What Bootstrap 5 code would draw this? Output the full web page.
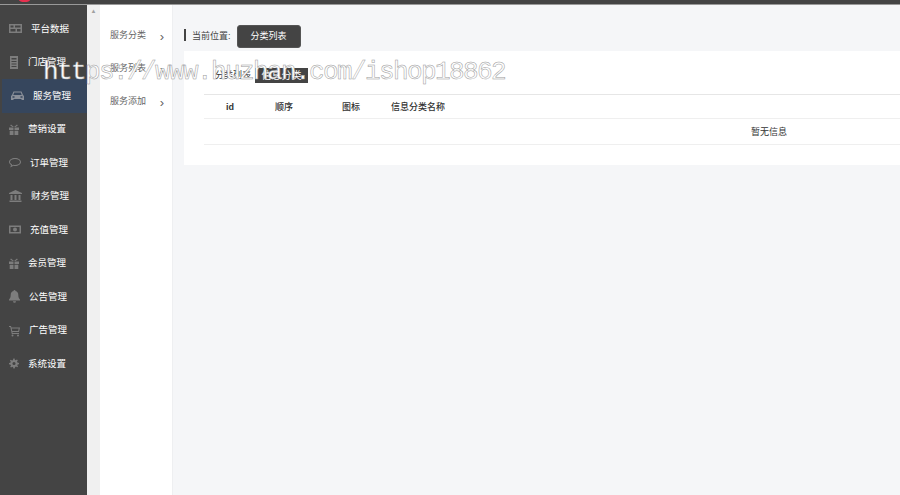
<!DOCTYPE html>
<html lang="zh">
<head>
  <meta charset="UTF-8" />
  <title>分类列表</title>
  <link href="https://cdn.jsdelivr.net/npm/bootstrap@5.3.3/dist/css/bootstrap.min.css" rel="stylesheet" />
  <style>
    html, body { height: 100%; }
    body {
      font-family: "Liberation Sans", "Noto Sans CJK SC", sans-serif;
      font-size: 9px;
      background: #f5f6f8;
      color: #333;
      overflow: hidden;
    }
    .top-strip { height: 5px; background: #444; border-bottom: 1px solid #999; overflow: hidden; }
    .top-logo { width: 11px; height: 4px; margin: -2px 0 0 19px; background: #e8304f; border-radius: 50%; }
    .page-body { height: 490px; }
    .side-main { width: 87px; background: #444; padding-top: 7px; }
    .side-item { height: 33.5px; padding-left: 9px; gap: 9px; color: #fff; font-size: 9.5px; white-space: nowrap; }
    .side-item svg { height: 13px; fill: #7d7d7d; flex: none; }
    .side-item.on { background: #36465d; margin-left: 2px; }
    .side-item.on svg { fill: #8a8f99; }
    .side-gutter { width: 13px; background: #f0f0f0; color: #a0a0a0; font-size: 6px; text-align: center; padding-top: 2px; }
    .side-sub { width: 73px; background: #fff; padding-top: 14.5px; border-right: 1px solid #eeeff1; }
    .sub-item { height: 33px; padding: 0 8px 0 10px; color: #666; }
    .sub-arrow { font-size: 13px; line-height: 1; }
    .content-area { padding: 20px 0 0 11px; min-width: 0; overflow: hidden; }
    .crumb-mark { width: 2px; height: 12px; margin: 0 6px 3px 0; background: #444; }
    .crumb-text { margin-right: 6px; color: #444; }
    .crumb-btn { background: #444; color: #fff; font-size: 9px; padding: 0; width: 64px; height: 23px; border: 1px solid #555; border-radius: 3px; }
    .panel-box { background: #fff; height: 114px; margin-top: 3px; padding-top: 17px; overflow: hidden; }
    .title-row { margin-left: 31px; height: 15px; line-height: 15px; }
    .title-plain { width: 40px; color: #333; }
    .panel-title { width: 53px; background: #444; color: #fff; font-size: 10px; text-align: center; }
    .info-table { margin: 11px 0 0 20px; width: 1130px; font-size: 9px; border-top: 1px solid #e6e6e6; }
    .info-table th, .info-table td { padding: 2px 0 0; border-bottom: 1px solid #efefef; color: #333; }
    .info-table th { height: 24px; font-weight: 500; }
    .info-table td { height: 26px; text-align: center; }
    .col-id { width: 52px; text-align: center; font-weight: 700 !important; }
    .col-order { width: 56px; text-align: center; }
    .col-icon { width: 78px; text-align: center; }
    .col-name { padding-left: 1px !important; }
    .mark-url {
      position: absolute; left: 43px; top: 57px;
      font-family: "Liberation Mono", "DejaVu Sans Mono", monospace; font-size: 26px; line-height: 30px;
      color: #fff; -webkit-text-stroke: 0.5px #999; letter-spacing: -1.6px; pointer-events: none; white-space: nowrap;
    }
  </style>
</head>
<body>
  <div class="top-strip"><div class="top-logo"></div></div>
  <div class="page-body d-flex">
    <nav class="side-main flex-shrink-0">
      <div class="side-item d-flex align-items-center"><svg width="13" viewBox="0 0 13 13"><path d="M0 2h13v9H0zM1.500 3.500v2h3v-2zm4.500 0v2h5.500v-2zM1.500 7v2.500h5V7zm6.500 0v2.500h3.500V7z" fill-rule="evenodd"/></svg><span>平台数据</span></div>
      <div class="side-item d-flex align-items-center"><svg width="10" viewBox="0 0 10 13"><path d="M1 0h8v13H1zM2.500 2v1.500h5V2zm0 3v1h5V5zm0 2.500v1h5v-1zm0 2.500v1h5v-1z" fill-rule="evenodd"/></svg><span>门店管理</span></div>
      <div class="side-item on d-flex align-items-center"><svg width="13" viewBox="0 0 13 13"><path d="M2.500 2.500h8l1.500 3.500 1 1v4h-2.500v-1h-8v1H0V7l1-1zm.7 1L2.300 6h8.400l-.9-2.500zM1.500 7.300v1.400h2V7.300zm8 0v1.400h2V7.300z" fill-rule="evenodd"/></svg><span>服务管理</span></div>
      <div class="side-item d-flex align-items-center"><svg width="10" viewBox="0 0 10 13"><path d="M0 4.500h4.500v2.500H0zm5.500 0H10v2.500H5.500zM.7 7.800h3.800V12H.7zm4.800 0h3.800V12H5.500zM2 1.500l3 2.500 3-2.500.8.9L6.500 4h-3L1.200 2.400z"/></svg><span>营销设置</span></div>
      <div class="side-item d-flex align-items-center"><svg width="12" viewBox="0 0 12 13"><path d="M6 2c3.300 0 6 1.700 6 4s-2.700 4-6 4c-.6 0-1.100 0-1.600-.2L1.300 11.500l.7-2.600C.8 8.100 0 7.100 0 6c0-2.300 2.700-4 6-4zm0 1C3.300 3 1 4.300 1 6c0 .9.700 1.700 2 2.300l-.3 1.300 1.600-.9c.5.200 1.100.3 1.700.3 2.700 0 5-1.300 5-3S8.700 3 6 3z"/></svg><span>订单管理</span></div>
      <div class="side-item d-flex align-items-center"><svg width="13" viewBox="0 0 13 13"><path d="M6.500 0l6.500 3v1H0V3zM1.500 5h2v5h-2zm4 0h2v5h-2zm4 0h2v5h-2zM.5 10.500h12V12H.5z"/></svg><span>财务管理</span></div>
      <div class="side-item d-flex align-items-center"><svg width="12" viewBox="0 0 12 13"><path d="M0 2.500h12v8H0zM1.500 4v5h9V4zM6 4.500a2 2 0 110 4 2 2 0 010-4z" fill-rule="evenodd"/></svg><span>充值管理</span></div>
      <div class="side-item d-flex align-items-center"><svg width="10" viewBox="0 0 10 13"><path d="M0 4.500h4.500v2.500H0zm5.500 0H10v2.500H5.500zM.7 7.800h3.800V12H.7zm4.800 0h3.800V12H5.500zM2 1.500l3 2.500 3-2.500.8.9L6.500 4h-3L1.200 2.400z"/></svg><span>会员管理</span></div>
      <div class="side-item d-flex align-items-center"><svg width="11" viewBox="0 0 11 13"><path d="M5.500 0a1 1 0 011 1c2 .4 2.800 2 2.800 4 0 1.800.4 3.200 1.700 4.500v1H0v-1C1.300 8.200 1.700 6.800 1.700 5c0-2 .8-3.600 2.800-4a1 1 0 011-1zM4 11.300h3a1.500 1.500 0 01-3 0z"/></svg><span>公告管理</span></div>
      <div class="side-item d-flex align-items-center"><svg width="11" viewBox="0 0 11 13"><path d="M0 2h2l.4 1.500H11L10 8H3.400l.2 1H10v1H2.800L1.300 3H0zm2.700 2.500L3.200 7h6l.5-2.500zM3.500 10.500a1 1 0 110 2 1 1 0 010-2zm5.500 0a1 1 0 110 2 1 1 0 010-2z" fill-rule="evenodd"/></svg><span>广告管理</span></div>
      <div class="side-item d-flex align-items-center"><svg width="10" viewBox="0 0 16 16"><path d="M7 0h2l.4 2.200 1.400.6 1.900-1.300 1.400 1.400-1.300 1.900.6 1.400L16 7v2l-2.200.4-.6 1.400 1.300 1.900-1.400 1.400-1.900-1.300-1.400.6L9 16H7l-.4-2.200-1.400-.6-1.900 1.300-1.400-1.400 1.300-1.900-.6-1.400L0 9V7l2.200-.4.6-1.400-1.300-1.900 1.400-1.400 1.900 1.300 1.400-.6zM8 5.500a2.500 2.500 0 100 5 2.500 2.500 0 000-5z" fill-rule="evenodd"/></svg><span>系统设置</span></div>
    </nav>
    <div class="side-gutter flex-shrink-0">▲</div>
    <aside class="side-sub flex-shrink-0">
      <div class="sub-item d-flex align-items-center justify-content-between"><span>服务分类</span><span class="sub-arrow">›</span></div>
      <div class="sub-item d-flex align-items-center justify-content-between"><span>服务列表</span><span class="sub-arrow">›</span></div>
      <div class="sub-item d-flex align-items-center justify-content-between"><span>服务添加</span><span class="sub-arrow">›</span></div>
    </aside>
    <main class="content-area flex-grow-1">
      <div class="d-flex align-items-center">
        <div class="crumb-mark"></div>
        <span class="crumb-text">当前位置:</span>
        <button class="crumb-btn" type="button">分类列表</button>
      </div>
      <div class="panel-box">
        <div class="title-row d-flex">
          <span class="title-plain">分类列表</span>
          <span class="panel-title">信息分类</span>
        </div>
        <table class="info-table">
          <tr><th class="col-id">id</th><th class="col-order">顺序</th><th class="col-icon">图标</th><th class="col-name">信息分类名称</th></tr>
          <tr><td colspan="4">暂无信息</td></tr>
        </table>
      </div>
    </main>
  </div>
  <div class="mark-url">https://www.huzhan.com/ishop18862</div>
  <script src="https://cdn.jsdelivr.net/npm/bootstrap@5.3.3/dist/js/bootstrap.bundle.min.js"></script>
</body>
</html>
